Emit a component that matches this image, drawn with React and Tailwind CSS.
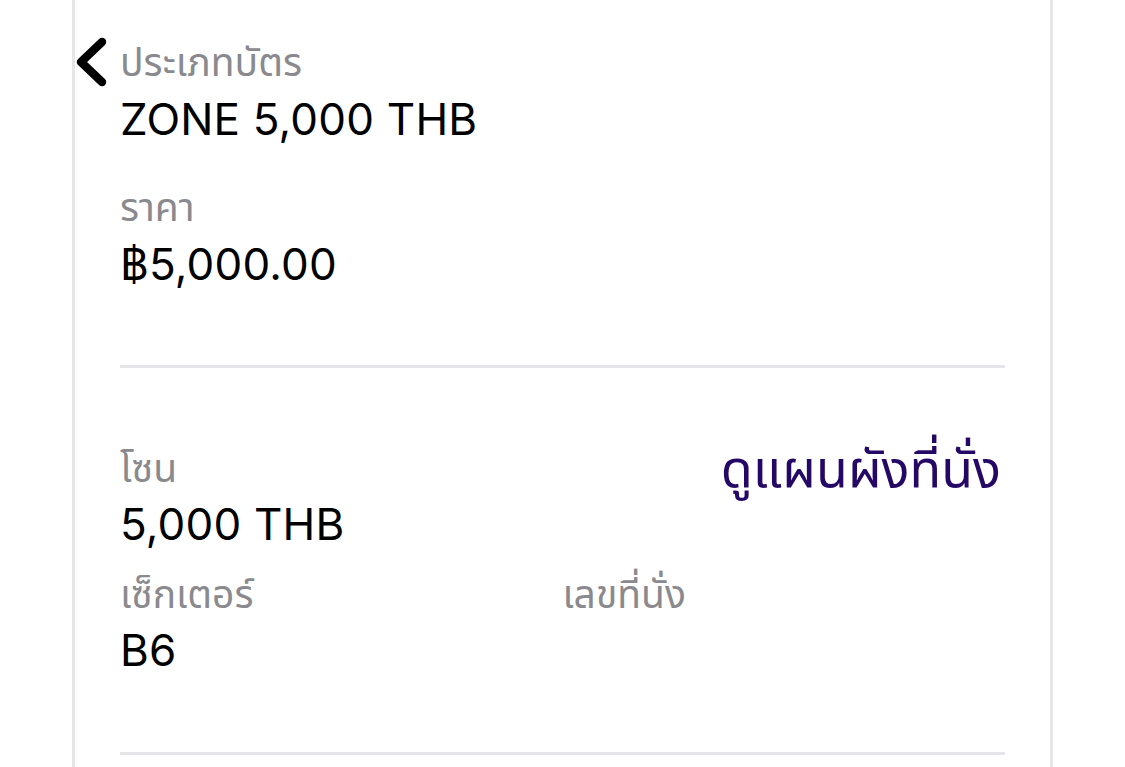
export default function App() {
  const font = { fontFamily: "Inter, 'Noto Sans', 'Noto Sans Thai', 'Liberation Sans', sans-serif" }

  return (
    <div className="min-h-[767px] w-[1125px] bg-white overflow-hidden" style={font}>
      <div className="relative ml-[72px] w-[981px] min-h-[767px] border-x-[3px] border-[#e6e6e8] px-[45px] pt-[42px]">
        <button className="absolute left-[-1px] top-[36px] w-[34px] h-[52px] flex items-center justify-center">
          <svg width="34" height="52" viewBox="0 0 34 52" fill="none">
            <path d="M28 6 L7 26 L28 46" stroke="#000" strokeWidth="8.5" strokeLinecap="round" strokeLinejoin="round" />
          </svg>
        </button>

        <div className="text-[39px] leading-[40px] text-[#8a8a8e]">ประเภทบัตร</div>
        <div className="mt-[12px] text-[44px] leading-[50px] tracking-[0.2px] text-black">ZONE 5,000 THB</div>

        <div className="mt-[43px] text-[39px] leading-[40px] text-[#8a8a8e]">ราคา</div>
        <div className="mt-[12px] text-[44px] leading-[50px] tracking-[0.2px] text-black">฿5,000.00</div>

        <div className="mt-[76px] h-[3px] bg-[#e6e6ea]" />

        <div className="mt-[80px] flex items-start justify-between">
          <div>
            <div className="text-[39px] leading-[40px] text-[#8a8a8e]">โซน</div>
            <div className="mt-[11px] text-[44px] leading-[50px] tracking-[0.2px] text-black">5,000 THB</div>
          </div>
          <button className="text-[52px] leading-[50px] text-[#250866] pr-[4px] -mt-[4px]">ดูแผนผังที่นั่ง</button>
        </div>

        <div className="mt-[25px] grid grid-cols-2">
          <div>
            <div className="text-[39px] leading-[40px] text-[#8a8a8e]">เซ็กเตอร์</div>
            <div className="mt-[11px] text-[44px] leading-[50px] tracking-[0.2px] text-black">B6</div>
          </div>
          <div>
            <div className="text-[39px] leading-[40px] text-[#8a8a8e]">เลขที่นั่ง</div>
          </div>
        </div>

        <div className="mt-[77px] h-[3px] bg-[#e6e6ea]" />
      </div>
    </div>
  )
}
